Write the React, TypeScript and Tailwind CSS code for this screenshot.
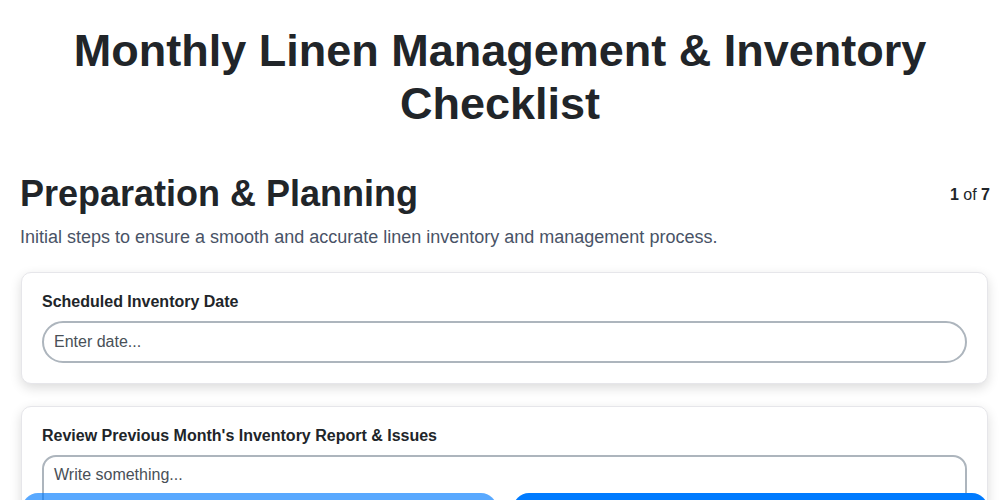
import React from 'react';

const fields = [
  { label: 'Scheduled Inventory Date', kind: 'input', placeholder: 'Enter date...' },
  { label: "Review Previous Month's Inventory Report & Issues", kind: 'textarea', placeholder: 'Write something...' },
];

const App: React.FC = () => {
  return (
    <div className="min-h-screen bg-white text-[#212529]" style={{ fontFamily: '"Liberation Sans", Arial, sans-serif' }}>
      <div className="pl-5 pr-[10px] pt-6 pb-40">
        <h1 className="-ml-5 -mr-[10px] px-10 text-center text-[45px] font-bold leading-[53px]">
          Monthly Linen Management &amp; Inventory Checklist
        </h1>

        <div className="mt-[41px] flex items-start justify-between">
          <h2 className="text-[36px] font-bold leading-[46px]">Preparation &amp; Planning</h2>
          <div className="pt-[12px] text-base">
            <span className="font-bold">1</span> of <span className="font-bold">7</span>
          </div>
        </div>
        <p className="mt-[7px] text-lg leading-[27px] text-[#495366]">
          Initial steps to ensure a smooth and accurate linen inventory and management process.
        </p>

        <div className="mt-[21px] ml-px mr-[2px] flex flex-col gap-[22px]">
          {fields.map((f) => (
            <div
              key={f.label}
              className="rounded-[10px] border border-[#e6e6ea] bg-white px-5 pt-[17px] pb-5 shadow-[0_4px_12px_rgba(0,0,0,0.14)]"
            >
              <label className="block text-base font-bold leading-6 text-[#212529]">{f.label}</label>
              {f.kind === 'input' ? (
                <input
                  className="mt-[7px] block h-[42px] w-full rounded-full border-2 border-[#adb5bd] bg-white px-[10px] text-base text-[#495057] placeholder:text-[#495057] outline-none"
                  placeholder={f.placeholder}
                />
              ) : (
                <textarea
                  className="mt-[7px] block h-[100px] w-full resize-none rounded-[14px] border-2 border-[#adb5bd] bg-white px-[10px] py-[6px] text-base text-[#495057] placeholder:text-[#495057] outline-none"
                  placeholder={f.placeholder}
                />
              )}
            </div>
          ))}
        </div>
      </div>

      {/* nav buttons sit below the fold; only their top edge shows */}
      <div className="fixed left-0 right-0 top-[493px] grid grid-cols-2 gap-4 pl-[22px] pr-[12px]">
        <button aria-label="Previous" className="h-12 rounded-[16px] bg-[#007bff] opacity-65" />
        <button aria-label="Next" className="h-12 rounded-[16px] bg-[#007bff]" />
      </div>
    </div>
  );
};

export default App;
